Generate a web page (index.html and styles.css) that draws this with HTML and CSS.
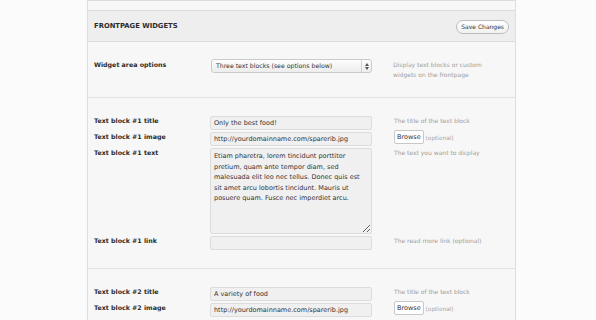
FILE: index.html
```html
<!DOCTYPE html>
<html lang="en">
<head>
    <meta charset="UTF-8">
    <meta name="viewport" content="width=device-width, initial-scale=1.0">
    <title>Frontpage Widgets</title>
    <link rel="stylesheet" href="styles.css">
</head>
<body>
    <div class="panel">
        <div class="panel-top"></div>

        <div class="panel-head">
            <h2>FRONTPAGE WIDGETS</h2>
            <button class="btn btn-save">Save Changes</button>
        </div>

        <div class="group group-first">
            <label class="field-label">Widget area options</label>
            <div class="select">
                <span class="select-text">Three text blocks (see options below)</span>
                <span class="select-arrow">
                    <svg width="4" height="7" viewBox="0 0 4 7"><path d="M0 3 L2 0 L4 3 Z M0 4 L2 7 L4 4 Z" fill="#555"/></svg>
                </span>
            </div>
            <p class="hint">Display text blocks or custom<br>widgets on the frontpage</p>
        </div>

        <div class="group">
            <label class="field-label">Text block #1 title</label>
            <input class="field" type="text" value="Only the best food!">
            <p class="hint">The title of the text block</p>

            <label class="field-label">Text block #1 image</label>
            <input class="field" type="text" value="http://yourdomainname.com/sparerib.jpg">
            <p class="hint"><button class="btn btn-browse">Browse</button> <span class="optional">(optional)</span></p>

            <label class="field-label">Text block #1 text</label>
            <textarea class="field field-area">Etiam pharetra, lorem tincidunt porttitor pretium, quam ante tempor diam, sed malesuada elit leo nec tellus. Donec quis est sit amet arcu lobortis tincidunt. Mauris ut posuere quam. Fusce nec imperdiet arcu.</textarea>
            <p class="hint">The text you want to display</p>

            <label class="field-label">Text block #1 link</label>
            <input class="field" type="text" value="">
            <p class="hint">The read more link (optional)</p>
        </div>

        <div class="group">
            <label class="field-label">Text block #2 title</label>
            <input class="field" type="text" value="A variety of food">
            <p class="hint">The title of the text block</p>

            <label class="field-label">Text block #2 image</label>
            <input class="field" type="text" value="http://yourdomainname.com/sparerib.jpg">
            <p class="hint"><button class="btn btn-browse">Browse</button> <span class="optional">(optional)</span></p>
        </div>
    </div>
</body>
</html>
```

FILE: styles.css
```css
* {
    margin: 0;
    padding: 0;
    box-sizing: border-box;
}

body {
    background-color: #fbfbfb;
    color: #333;
    font-family: 'DejaVu Sans', Verdana, sans-serif;
    font-size: 6.5px;
    overflow: hidden;
}

.panel {
    margin-left: 87px;
    width: 429px;
    min-height: 100vh;
    background-color: #f7f7f7;
    border-left: 1px solid #dedede;
    border-right: 1px solid #dedede;
}

.panel-top {
    height: 10px;
    border-top: 1px solid #dcdcdc;
}

.panel-head {
    height: 32px;
    display: flex;
    align-items: center;
    justify-content: space-between;
    padding: 0 6px 0 6px;
    background-color: #eeeeee;
    border-top: 1px solid #dcdcdc;
    border-bottom: 1px solid #dcdcdc;
}

.panel-head h2 {
    font-size: 6.8px;
    font-weight: 700;
    color: #2b2b2b;
}

.btn {
    font-family: 'DejaVu Sans', Verdana, sans-serif;
    color: #333;
    cursor: pointer;
}

.btn-save {
    height: 14px;
    padding: 0 4px;
    font-size: 6px;
    background: linear-gradient(#ffffff, #f1f1f1);
    border: 1px solid #bdbdbd;
    border-radius: 7px;
    margin-top: 1px;
}

.group {
    display: grid;
    grid-template-columns: 116px 162px 1fr;
    row-gap: 2px;
    padding: 18px 6px 18px 6px;
    border-bottom: 1px solid #e2e2e2;
}

.group-first {
    padding-top: 17px;
    padding-bottom: 17px;
    align-items: start;
}

.field-label {
    font-weight: 700;
    font-size: 6.3px;
    line-height: 10px;
    color: #2b2b2b;
}

.group-first .field-label {
    padding-top: 1px;
}

.hint {
    padding-left: 22px;
    line-height: 10px;
    font-size: 6px;
    color: #9d9d9d;
}

.group-first .hint {
    padding-left: 21px;
    padding-top: 1px;
}

.select {
    margin-left: 1px;
    height: 14px;
    display: flex;
    align-items: stretch;
    background: linear-gradient(#fdfdfd, #ececec);
    border: 1px solid #cacaca;
    border-radius: 3px;
}

.select-text {
    flex: 1;
    padding-left: 4px;
    line-height: 12px;
    font-size: 6.2px;
    color: #333;
}

.select-arrow {
    width: 10px;
    display: flex;
    align-items: center;
    justify-content: center;
    border-left: 1px solid #d2d2d2;
}

.field {
    height: 14px;
    padding: 0 3px;
    font-family: 'DejaVu Sans', Verdana, sans-serif;
    font-size: 6.5px;
    color: #333;
    background-color: #f0f0f0;
    border: 1px solid #dcdcdc;
    border-radius: 2px;
    outline: none;
}

.field-area {
    height: 86px;
    padding: 2px 3px;
    line-height: 10.6px;
    resize: vertical;
}

.btn-browse {
    height: 14px;
    padding: 0 2px;
    font-size: 6.5px;
    background-color: #fff;
    border: 1px solid #c8c8c8;
    border-radius: 2px;
    vertical-align: middle;
}

.hint .btn-browse {
    margin-top: -2px;
}

.optional {
    font-size: 5.8px;
    color: #a8a8a8;
    vertical-align: middle;
}
```
